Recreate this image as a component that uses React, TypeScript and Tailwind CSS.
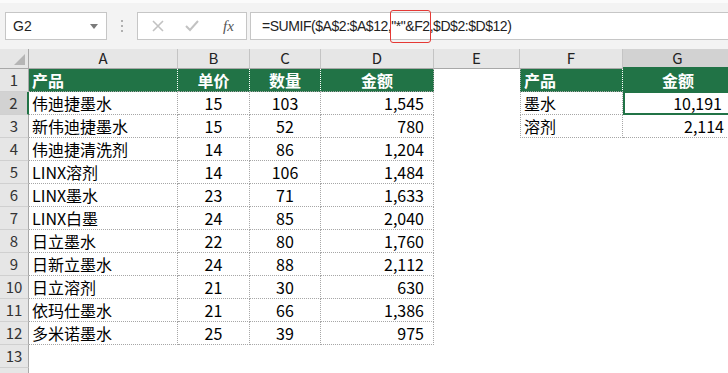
import React from "react";

const rows: [string, number, number, string][] = [
  ["伟迪捷墨水", 15, 103, "1,545"],
  ["新伟迪捷墨水", 15, 52, "780"],
  ["伟迪捷清洗剂", 14, 86, "1,204"],
  ["LINX溶剂", 14, 106, "1,484"],
  ["LINX墨水", 23, 71, "1,633"],
  ["LINX白墨", 24, 85, "2,040"],
  ["日立墨水", 22, 80, "1,760"],
  ["日新立墨水", 24, 88, "2,112"],
  ["日立溶剂", 21, 30, "630"],
  ["依玛仕墨水", 21, 66, "1,386"],
  ["多米诺墨水", 25, 39, "975"],
];

const summary: [string, string][] = [
  ["墨水", "10,191"],
  ["溶剂", "2,114"],
];

const cols = ["A", "B", "C", "D", "E", "F", "G"];

const dot = "border-[#a6a6a6] border-dotted";

function RowHead({ n, active }: { n: number | null; active?: boolean }) {
  return (
    <div
      className={
        "flex items-center justify-center text-[15px] text-[#333] border-b border-[#d0d0d0] " +
        (active ? "bg-[#d2d2d2] border-r-2 border-r-[#217346]" : "bg-[#e6e6e6] border-r border-r-[#a8a8a8]")
      }
    >
      {n}
    </div>
  );
}

export default function App() {
  const cells: React.ReactNode[] = [];

  // column header row
  cells.push(
    <div key="corner" className="relative bg-[#e6e6e6] border-r border-b border-[#a8a8a8]">
      <svg className="absolute right-[3px] bottom-[3px]" width="11" height="11" viewBox="0 0 11 11">
        <polygon points="11,0 11,11 0,11" fill="#b5b5b5" />
      </svg>
    </div>
  );
  cols.forEach((c) => {
    const sel = c === "G";
    cells.push(
      <div
        key={"h" + c}
        className={
          "flex items-center justify-center text-[15px] text-[#222] border-r border-[#c4c4c4] " +
          (sel ? "bg-[#d2d2d2] border-b-2 border-b-[#217346]" : "bg-[#e6e6e6] border-b border-b-[#a8a8a8]")
        }
      >
        {c}
      </div>
    );
  });

  for (let r = 1; r <= 14; r++) {
    cells.push(<RowHead key={"r" + r} n={r <= 13 ? r : null} active={r === 2} />);
    // A-D
    if (r === 1) {
      cells.push(
        <div key="a1" className="flex items-center pl-[3px] bg-[#217346] text-white font-bold border-r border-dotted border-r-white border-b border-b-[#a6a6a6]">产品</div>,
        <div key="b1" className="flex items-center justify-center bg-[#217346] text-white font-bold border-r border-dotted border-r-white border-b border-b-[#a6a6a6]">单价</div>,
        <div key="c1" className="flex items-center justify-center bg-[#217346] text-white font-bold border-r border-dotted border-r-white border-b border-b-[#a6a6a6]">数量</div>,
        <div key="d1" className={"flex items-center justify-center bg-[#217346] text-white font-bold border-r border-b " + dot}>金额</div>
      );
    } else if (r <= 12) {
      const d = rows[r - 2];
      cells.push(
        <div key={"a" + r} className={"flex items-center pl-[3px] border-r border-b " + dot}>{d[0]}</div>,
        <div key={"b" + r} className={"flex items-center justify-center border-r border-b " + dot}>{d[1]}</div>,
        <div key={"c" + r} className={"flex items-center justify-center border-r border-b " + dot}>{d[2]}</div>,
        <div key={"d" + r} className={"flex items-center justify-end pr-[9px] border-r border-b " + dot}>{d[3]}</div>
      );
    } else {
      cells.push(<div key={"a" + r} />, <div key={"b" + r} />, <div key={"c" + r} />, <div key={"d" + r} />);
    }
    // E
    cells.push(<div key={"e" + r} />);
    // F-G
    if (r === 1) {
      cells.push(
        <div key="f1" className={"flex items-center pl-[3px] bg-[#217346] text-white font-bold border-l border-b border-r border-r-white " + dot}>产品</div>,
        <div key="g1" className="flex items-center justify-center bg-[#217346] text-white font-bold border-b border-dotted border-b-[#a6a6a6]">金额</div>
      );
    } else if (r <= 3) {
      const s = summary[r - 2];
      cells.push(
        <div key={"f" + r} className={"flex items-center pl-[3px] border-l border-r border-b " + dot}>{s[0]}</div>,
        <div
          key={"g" + r}
          className={
            "relative flex items-center justify-end pr-[9px] " +
            (r === 2 ? "border-2 border-[#217346] -mt-px" : "border-b " + dot)
          }
        >
          {s[1]}
          {r === 2 && (
            <span className="absolute -right-[4px] -bottom-[4px] w-[6px] h-[6px] bg-[#217346] border border-white" />
          )}
        </div>
      );
    } else {
      cells.push(<div key={"f" + r} />, <div key={"g" + r} />);
    }
  }

  return (
    <div className="w-[728px] h-[373px] overflow-hidden bg-white font-['Noto_Sans_CJK_SC',sans-serif] text-black">
      {/* formula bar */}
      <div className="h-[49px] bg-[#f3f3f3] border-t-[3px] border-t-[#fbfbfb] flex items-center">
        <div className="ml-[5px] w-[102px] h-[28px] bg-white border border-[#c6c6c6] flex items-center justify-between pl-[7px] pr-[8px] text-[14px] text-[#222] font-['Liberation_Sans',sans-serif]">
          <span>G2</span>
          <svg width="8" height="5" viewBox="0 0 8 5">
            <polygon points="0,0 8,0 4,5" fill="#7a7a7a" />
          </svg>
        </div>
        <div className="w-[30px] flex flex-col items-center gap-[3px]">
          <span className="w-[2px] h-[2px] bg-[#b0b0b0]" />
          <span className="w-[2px] h-[2px] bg-[#b0b0b0]" />
          <span className="w-[2px] h-[2px] bg-[#b0b0b0]" />
        </div>
        <div className="w-[110px] h-[28px] bg-white border border-[#c6c6c6] flex items-center pl-[14px] gap-[21px]">
          <svg width="12" height="12" viewBox="0 0 12 12">
            <path d="M1 1 L11 11 M11 1 L1 11" stroke="#c2c2c2" strokeWidth="1.6" />
          </svg>
          <svg width="14" height="12" viewBox="0 0 14 12">
            <path d="M1 6 L5 10 L13 1" stroke="#c2c2c2" strokeWidth="2" fill="none" />
          </svg>
          <span className="ml-[3px] font-['Liberation_Serif',serif] italic text-[15px] text-[#555] leading-none">fx</span>
        </div>
        <div className="ml-[3px] flex-1 h-[28px] bg-white border border-[#c6c6c6] border-r-0 flex items-center pl-[11px] text-[14px] tracking-[-0.45px] text-[#222] font-['Liberation_Sans',sans-serif] whitespace-nowrap">
          <span>=SUMIF($A$2:$A$12,</span>
          <span className="relative">
            "*"&amp;F2
            <span className="absolute -left-[1px] -right-[1px] -top-[6px] -bottom-[6px] border border-[#e53935] rounded-[3px]" />
          </span>
          <span>,$D$2:$D$12)</span>
        </div>
      </div>
      {/* sheet */}
      <div className="grid grid-cols-[29px_149px_72px_71px_113px_86px_103px_110px] grid-rows-[20px_repeat(14,23px)] text-[16px]">
        {cells}
      </div>
    </div>
  );
}
